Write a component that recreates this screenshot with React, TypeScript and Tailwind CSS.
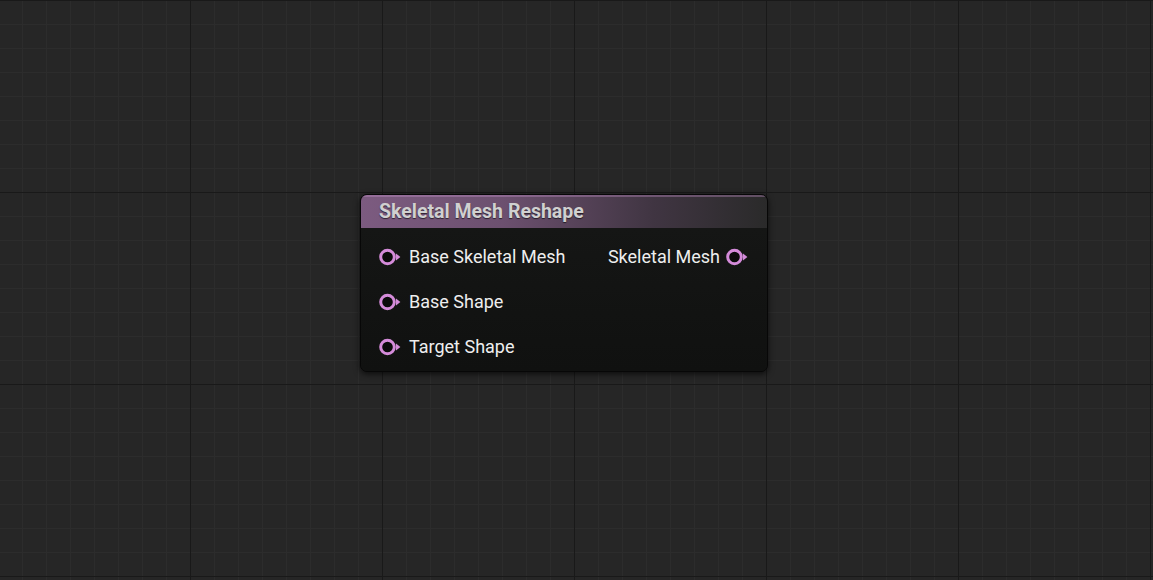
import React from "react";

const Pin = () => (
  <svg width="24" height="18" viewBox="0 0 24 18" className="shrink-0">
    <circle cx="8.5" cy="9" r="6.8" fill="#0b0b0b" stroke="#d48bd9" strokeWidth="3" />
    <path d="M17 5.4 L21.4 9 L17 12.6 Z" fill="#d48bd9" />
  </svg>
);

const inputs = ["Base Skeletal Mesh", "Base Shape", "Target Shape"];

export default function App() {
  return (
    <div
      className="relative h-[580px] w-full overflow-hidden bg-[#262626] [background-image:linear-gradient(to_right,#191919_1px,transparent_1px),linear-gradient(to_bottom,#191919_1px,transparent_1px),linear-gradient(to_right,#2c2c2c_1px,transparent_1px),linear-gradient(to_bottom,#2c2c2c_1px,transparent_1px)] [background-size:192px_192px,192px_192px,24px_24px,24px_24px] [background-position:-2px_0,-2px_0,-2px_0,-2px_0]"
      style={{ fontFamily: "Roboto, 'Liberation Sans', sans-serif" }}
    >
      {/* node */}
      <div className="absolute left-[360px] top-[194px] w-[408px] overflow-hidden rounded-[7px] border border-[#070707] bg-[#111211] shadow-[0_2px_6px_rgba(0,0,0,0.7)]">
        <div className="flex h-[33px] items-center bg-[linear-gradient(to_right,#7c5b80,#6c506f_35%,#403542_72%,#2a2a2a)] pl-[18px] shadow-[inset_0_2px_0_rgba(200,150,205,0.35)]">
          <span className="text-[19.5px] font-bold text-[#d0d0d0] [text-shadow:0_1px_1px_rgba(0,0,0,0.6)]">
            Skeletal Mesh Reshape
          </span>
        </div>
        <div className="flex bg-[linear-gradient(to_bottom,#151615,#101110)] pb-[2px] pt-[6px]">
          <div className="flex flex-1 flex-col">
            {inputs.map((label) => (
              <div key={label} className="flex h-[45px] items-center pl-[18px]">
                <Pin />
                <span className="ml-[6px] text-[18px] text-[#eeeeee]">{label}</span>
              </div>
            ))}
          </div>
          <div className="flex flex-col">
            <div className="flex h-[45px] items-center pr-[17px]">
              <span className="mr-[6px] text-[18px] text-[#eeeeee]">Skeletal Mesh</span>
              <Pin />
            </div>
          </div>
        </div>
      </div>
    </div>
  );
}
